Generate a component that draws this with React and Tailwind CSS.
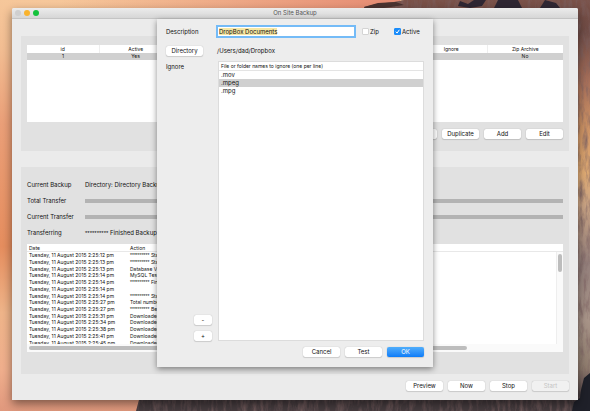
import React, { useEffect, useRef, useState } from 'react';

const tasks = [{ id: 1, active: 'Yes', ignore: '', zip: 'No' }];

const logRows = [
  { time: '2:25:12', stars: true, action: 'Started Backup' },
  { time: '2:25:13', stars: true, action: 'Started Database' },
  { time: '2:25:13', action: 'Database Version' },
  { time: '2:25:14', action: 'MySQL Test' },
  { time: '2:25:14', stars: true, action: 'Finished Database' },
  { time: '2:25:14', action: '' },
  { time: '2:25:14', stars: true, action: 'Started Directory' },
  { time: '2:25:27', action: 'Total number of files' },
  { time: '2:25:27', stars: true, action: 'Begin Download' },
  { time: '2:25:31', action: 'Downloaded' },
  { time: '2:25:34', action: 'Downloaded' },
  { time: '2:25:38', action: 'Downloaded' },
  { time: '2:25:41', action: 'Downloaded' },
  { time: '2:25:45', action: 'Downloaded' },
];

const ignoreNames = ['.mov', '.mpeg', '.mpg'];

function Button({ children, className = 'w-[37px]', primary, disabled }) {
  const look = primary
    ? 'bg-linear-to-b from-[#4fadfb] to-[#0a7cf8] text-white'
    : disabled
      ? 'bg-[#f1f1f1] text-[#c4c4c4]'
      : 'bg-white text-[#111]';
  return (
    <button
      type="button"
      disabled={disabled}
      className={`h-[10px] shrink-0 rounded-[2px] text-center text-[6px] leading-[10px] shadow-[0_0_1px_rgba(0,0,0,0.3),0_1px_1px_rgba(0,0,0,0.12)] ${look} ${className}`}
    >
      {children}
    </button>
  );
}

// Desktop picture behind the window: evening sky and a rock face
function Wallpaper() {
  return (
    <svg className="absolute inset-0 h-full w-full" viewBox="0 0 590 411" preserveAspectRatio="none" aria-hidden="true">
      <defs>
        <linearGradient id="sky" x1="0" y1="0" x2="0" y2="1">
          <stop offset="0" stopColor="#f6c79a" />
          <stop offset="0.12" stopColor="#f2bd92" />
          <stop offset="0.3" stopColor="#ea9f78" />
          <stop offset="0.6" stopColor="#e58d5e" />
          <stop offset="0.76" stopColor="#eeb489" />
          <stop offset="0.9" stopColor="#efae8c" />
          <stop offset="1" stopColor="#e0987d" />
        </linearGradient>
        <linearGradient id="glow" x1="0" y1="0" x2="1" y2="0">
          <stop offset="0" stopColor="#e58a72" stopOpacity="0" />
          <stop offset="1" stopColor="#e58a72" />
        </linearGradient>
        <linearGradient id="rock" x1="0" y1="0" x2="0" y2="1">
          <stop offset="0" stopColor="#7a5148" />
          <stop offset="0.08" stopColor="#6e4a44" />
          <stop offset="0.2" stopColor="#a8705a" />
          <stop offset="0.32" stopColor="#cf9566" />
          <stop offset="0.42" stopColor="#e0ab74" />
          <stop offset="0.5" stopColor="#c9a384" />
          <stop offset="0.64" stopColor="#94807c" />
          <stop offset="0.78" stopColor="#a89488" />
          <stop offset="0.9" stopColor="#8d7b6c" />
          <stop offset="0.96" stopColor="#453b3e" />
          <stop offset="1" stopColor="#453b3e" />
        </linearGradient>
        <filter id="cracks" x="0" y="0" width="1" height="1">
          <feTurbulence type="fractalNoise" baseFrequency="0.25 0.06" numOctaves="4" seed="8" />
          <feColorMatrix values="0 0 0 0 0.2  0 0 0 0 0.12  0 0 0 0 0.12  1.6 0 0 0 -0.65" />
          <feComposite in2="SourceGraphic" operator="in" />
        </filter>
      </defs>
      <rect width="590" height="411" fill="url(#sky)" />
      <rect x="60" width="340" height="12" fill="url(#glow)" />
      <path d="M364 7 L376 4 L394 2 L404 0 H590 V411 H136 L139 400 L160 380 L364 200Z" fill="url(#rock)" />
      <path
        d="M364 7 L376 4 L394 2 L404 0 H590 V411 H136 L139 400 L160 380 L364 200Z"
        fill="#000"
        filter="url(#cracks)"
      />
      <path d="M364 7 L378 3 L396 2 L404 5 L384 8 L366 9Z" fill="#4b3330" />
      <path d="M460 1 L468 4 L474 0 H486 L482 6 L470 8 L458 6Z M498 0 H518 L522 8 H494Z M545 0 L556 3 L560 8 H540Z" fill="#2f2733" />
      <path d="M584 378 L590 373 V411 H572 L574 402 L580 398 L581 390Z" fill="#1f2029" />
    </svg>
  );
}

function Stars({ count }) {
  return <span className="font-['Liberation_Sans',sans-serif]">{'*'.repeat(count)}</span>;
}

function TaskPanel() {
  return (
    <section className="bg-[#e1e1e1] px-[6px] pt-[9px] pb-[12px]">
      <div className="h-[77px] bg-white">
        <table className="w-full table-fixed text-center text-[5px] text-[#111]">
          <colgroup>
            <col className="w-[72px]" />
            <col className="w-[73px]" />
            <col />
            <col className="w-[71px]" />
            <col className="w-[76px]" />
          </colgroup>
          <thead>
            <tr className="h-[8px] leading-[8px]">
              <th className="border-r border-[#eee] font-normal">id</th>
              <th className="font-normal">Active</th>
              <th></th>
              <th className="border-r border-[#eee] font-normal">Ignore</th>
              <th className="font-normal">Zip Archive</th>
            </tr>
          </thead>
          <tbody>
            {tasks.map((task) => (
              <tr key={task.id} className="h-[7px] bg-[#d0d0d0] leading-[7px]">
                <td>{task.id}</td>
                <td>{task.active}</td>
                <td></td>
                <td>{task.ignore}</td>
                <td>{task.zip}</td>
              </tr>
            ))}
          </tbody>
        </table>
      </div>
      <div className="mt-[7px] flex justify-end gap-[5px]">
        <Button>Delete</Button>
        <Button>Duplicate</Button>
        <Button>Add</Button>
        <Button>Edit</Button>
      </div>
    </section>
  );
}

function StatusRow({ label, children }) {
  return (
    <div className="flex h-[16px] items-center">
      <span className="w-[58px] shrink-0">{label}</span>
      <div className="min-w-0 flex-1 whitespace-nowrap">{children}</div>
    </div>
  );
}

function ProgressBar({ label }) {
  return <div role="progressbar" aria-label={label} className="h-[4px] bg-[#b3b3b3]"></div>;
}

function TransferPanel() {
  return (
    <section className="bg-[#e1e1e1] px-[6px] pt-[10px] pb-[22px] text-[6px] leading-[8px] text-[#111]">
      <StatusRow label="Current Backup">Directory: Directory Backup</StatusRow>
      <StatusRow label="Total Transfer">
        <ProgressBar label="Total Transfer" />
      </StatusRow>
      <StatusRow label="Current Transfer">
        <ProgressBar label="Current Transfer" />
      </StatusRow>
      <StatusRow label="Transferring">
        <Stars count={10} /> Finished Backup
      </StatusRow>

      <div className="mt-[3px] bg-white text-[5px]">
        <div className="flex h-[8px] border-b border-[#e8e8e8] leading-[8px]">
          <span className="w-[101px] pl-[2px]">Date</span>
          <span className="pl-[2px]">Action</span>
        </div>
        <div className="flex">
          <div className="h-[92px] min-w-0 flex-1 overflow-hidden">
            <table className="h-[94px] w-full table-fixed leading-[6px] whitespace-nowrap">
              <colgroup>
                <col className="w-[101px]" />
                <col />
              </colgroup>
              <tbody>
                {logRows.map((row, index) => (
                  <tr key={index}>
                    <td className="pl-[2px]">Tuesday, 11 August 2015 {row.time} pm</td>
                    <td className="pl-[2px]">
                      {row.stars && <Stars count={10} />} {row.action}
                    </td>
                  </tr>
                ))}
              </tbody>
            </table>
          </div>
          <div className="w-[7px] border-l border-[#eee] bg-[#fafafa] pt-[2px] pl-[1px]">
            <div className="h-[18px] w-[4px] rounded-full bg-[#bdbdbd]"></div>
          </div>
        </div>
        <div className="flex h-[8px] items-center bg-[#fafafa] pl-[2px]">
          <div className="h-[4px] w-[82%] rounded-full bg-[#bdbdbd]"></div>
        </div>
      </div>
    </section>
  );
}

function CheckBox({ label, defaultChecked }) {
  return (
    <label className="flex items-center gap-[1px]">
      <span className="grid size-[7px]">
        <input
          type="checkbox"
          defaultChecked={defaultChecked}
          className="peer col-start-1 row-start-1 size-[7px] appearance-none rounded-[1px] border border-[#d4d4d4] bg-white checked:border-[#1a8cfa] checked:bg-[#1a8cfa]"
        />
        <svg
          viewBox="0 0 7 7"
          className="pointer-events-none col-start-1 row-start-1 hidden size-[7px] peer-checked:block"
          fill="none"
          stroke="#fff"
        >
          <path d="M1.8 3.7 L3.1 5.1 L5.3 1.8" />
        </svg>
      </span>
      {label}
    </label>
  );
}

function EditSheet() {
  const [description, setDescription] = useState('DropBox Documents');
  const inputRef = useRef(null);

  useEffect(() => {
    inputRef.current.focus();
    inputRef.current.select();
  }, []);

  return (
    <div
      role="dialog"
      aria-label="Edit backup"
      className="absolute inset-x-0 top-0 mx-auto w-[276px] bg-[#ededed] px-[9px] pt-[6px] pb-[10px] text-[6px] leading-[8px] text-[#111] shadow-[0_2px_6px_rgba(0,0,0,0.45)]"
    >
      <div className="flex items-center">
        <label htmlFor="description" className="w-[50px]">
          Description
        </label>
        <input
          id="description"
          ref={inputRef}
          value={description}
          onChange={(e) => setDescription(e.target.value)}
          className="h-[13px] w-[140px] border-2 border-[#74bbf7] bg-white px-px outline-none selection:bg-[#f6e7a3] selection:text-[#111]"
        />
        <div className="ml-[6px] flex gap-[15px]">
          <CheckBox label="Zip" />
          <CheckBox label="Active" defaultChecked />
        </div>
      </div>

      <div className="mt-[8px] flex items-center">
        <div className="flex w-[51px]">
          <Button>Directory</Button>
        </div>
        <span>/Users/dad/Dropbox</span>
      </div>

      <div className="mt-[5px] flex">
        <div className="flex w-[52px] flex-col justify-between pt-[2px]">
          <span>Ignore</span>
          <div className="flex flex-col items-end gap-[6px] pr-[6px]">
            <Button className="w-[18px]">-</Button>
            <Button className="w-[18px]">+</Button>
          </div>
        </div>
        <div className="h-[280px] flex-1 border border-[#dcdcdc] bg-white">
          <table className="w-full">
            <thead>
              <tr className="h-[8px] border-b border-[#e4e4e4] text-left text-[5px] leading-[8px]">
                <th className="pl-[2px] font-normal">File or folder names to ignore (one per line)</th>
              </tr>
            </thead>
            <tbody>
              {ignoreNames.map((name) => (
                <tr key={name} className={name === '.mpeg' ? 'bg-[#d0d0d0]' : ''}>
                  <td className="pl-[2px]">{name}</td>
                </tr>
              ))}
            </tbody>
          </table>
        </div>
      </div>

      <div className="mt-[6px] flex justify-end gap-[5px]">
        <Button>Cancel</Button>
        <Button>Test</Button>
        <Button primary>OK</Button>
      </div>
    </div>
  );
}

export default function App() {
  return (
    <div className="relative min-h-screen overflow-hidden px-[12px] pt-[8px] pb-[11px] font-['Inter',sans-serif]">
      <Wallpaper />
      <main className="relative rounded-t-[2px] bg-[#ebebeb] shadow-[0_4px_10px_rgba(0,0,0,0.45)]">
        <header className="grid h-[11px] grid-cols-[1fr_auto_1fr] items-center rounded-t-[2px] border-b border-[#c4c4c4] bg-linear-to-b from-[#ececec] to-[#d6d6d6] px-[3px]">
          <div className="flex gap-[3px]">
            <span className="size-[6px] rounded-full bg-[#cfcfcf]"></span>
            <span className="size-[6px] rounded-full bg-[#f9b32d]"></span>
            <span className="size-[6px] rounded-full bg-[#14c23c]"></span>
          </div>
          <h1 className="text-[6px] leading-[8px] text-[#555]">On Site Backup</h1>
        </header>
        <div className="relative px-[9px] pt-[17px] pb-[9px]">
          <div className="flex flex-col gap-[16px]">
            <TaskPanel />
            <TransferPanel />
          </div>
          <div className="mt-[7px] flex justify-end gap-[5px]">
            <Button>Preview</Button>
            <Button>Now</Button>
            <Button>Stop</Button>
            <Button disabled>Start</Button>
          </div>
          <EditSheet />
        </div>
      </main>
    </div>
  );
}
